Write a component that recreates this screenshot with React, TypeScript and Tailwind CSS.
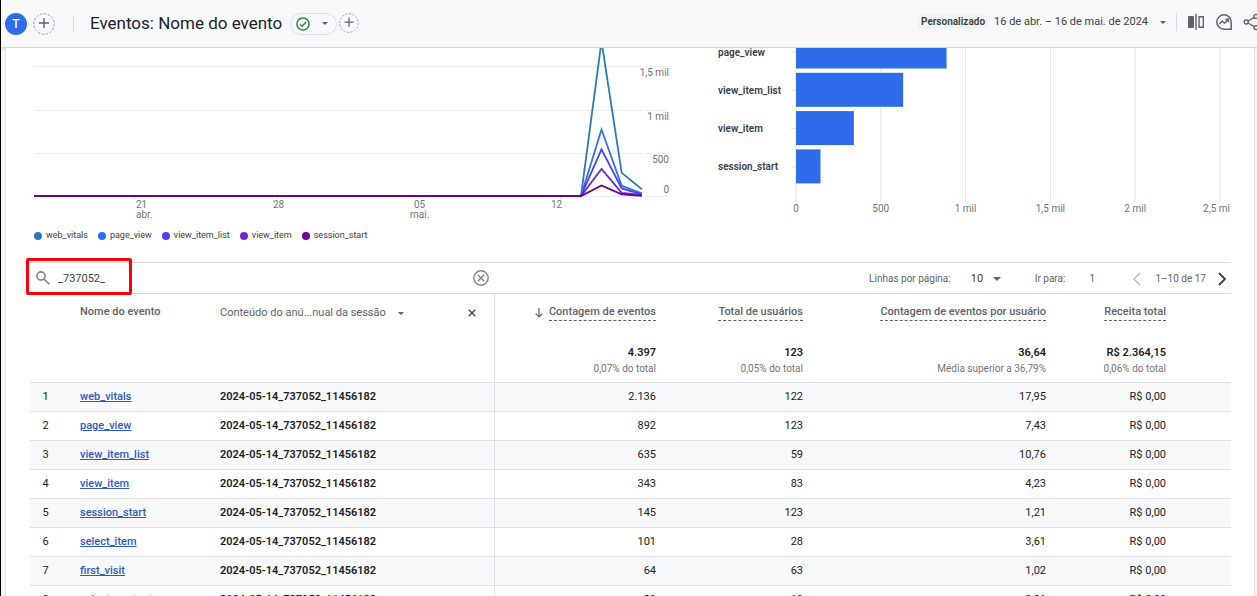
import { useState } from "react";
import type { ReactNode } from "react";

type Series = { name: string; color: string; points: number[] };

// Últimos dias do período; antes disso todas as séries ficam em zero.
const series: Series[] = [
  { name: "web_vitals", color: "#2a7ab5", points: [1790, 268, 78] },
  { name: "page_view", color: "#2f6fed", points: [770, 118, 30] },
  { name: "view_item_list", color: "#4f3ff0", points: [540, 88, 18] },
  { name: "view_item", color: "#7627d4", points: [312, 36, 12] },
  { name: "session_start", color: "#6a0392", points: [122, 20, 2] }
];

const bars = [
  { name: "page_view", value: 892 },
  { name: "view_item_list", value: 635 },
  { name: "view_item", value: 343 },
  { name: "session_start", value: 145 }
];

const metrics = [
  { label: "Contagem de eventos", total: "4.397", note: "0,07% do total", sorted: true },
  { label: "Total de usuários", total: "123", note: "0,05% do total" },
  { label: "Contagem de eventos por usuário", total: "36,64", note: "Média superior a 36,79%" },
  { label: "Receita total", total: "R$ 2.364,15", note: "0,06% do total" }
];

const content = "2024-05-14_737052_11456182";

const rows = [
  { name: "web_vitals", values: ["2.136", "122", "17,95", "R$ 0,00"] },
  { name: "page_view", values: ["892", "123", "7,43", "R$ 0,00"] },
  { name: "view_item_list", values: ["635", "59", "10,76", "R$ 0,00"] },
  { name: "view_item", values: ["343", "83", "4,23", "R$ 0,00"] },
  { name: "session_start", values: ["145", "123", "1,21", "R$ 0,00"] },
  { name: "select_item", values: ["101", "28", "3,61", "R$ 0,00"] },
  { name: "first_visit", values: ["64", "63", "1,02", "R$ 0,00"] },
  { name: "select_content", values: ["39", "13", "3,31", "R$ 0,00"] }
];

function Caret({ className = "h-[3px] w-1.5" }: { className?: string }) {
  return (
    <svg viewBox="0 0 8 4" className={`shrink-0 fill-[#5f6368] ${className}`} aria-hidden="true">
      <path d="M0 0h8L4 4z" />
    </svg>
  );
}

function AddButton({ label, className }: { label: string; className: string }) {
  return (
    <button type="button" aria-label={label} className={`shrink-0 ${className}`}>
      <svg viewBox="0 0 22 22" fill="none" stroke="#5f6368" className="h-full w-full">
        <circle cx="11" cy="11" r="10.3" stroke="#9aa0a6" strokeDasharray="2.5 1.5" />
        <path d="M11 5v10M6 10h10" strokeWidth="1.4" />
      </svg>
    </button>
  );
}

function IconButton({ label, children }: { label: string; children: ReactNode }) {
  return (
    <button type="button" aria-label={label} className="shrink-0 text-[#5f6368]">
      {children}
    </button>
  );
}

function Header() {
  return (
    <header className="flex h-12 shrink-0 items-center overflow-hidden border-b border-[#d5d7da] bg-[#f8f9fb] pl-1 whitespace-nowrap shadow-sm">
      <button
        type="button"
        className="flex size-[22px] shrink-0 items-center justify-center rounded-full bg-[#2f6ce9] text-xs font-medium text-white"
      >
        T
      </button>
      <AddButton label="Adicionar comparação" className="ml-1.5 size-[22px]" />
      <span className="ml-[18px] h-[18px] w-px bg-[#dadce0]" />
      <h1 className="ml-4 text-[17px] text-[#202124]">Eventos: Nome do evento</h1>
      <button
        type="button"
        aria-label="Status do relatório"
        className="ml-2 flex h-[22px] items-center gap-3 rounded-full border border-[#dfe1e5] pr-2 pl-[5px]"
      >
        <svg viewBox="0 0 14 14" fill="none" stroke="#35803f" className="size-3.5">
          <circle cx="7" cy="7" r="6.1" strokeWidth="1.5" />
          <path d="M4 7.2l2.1 2.1L10.2 5" strokeWidth="1.4" />
        </svg>
        <Caret />
      </button>
      <AddButton label="Adicionar filtro" className="mb-0.5 ml-0.5 size-5" />

      <div className="-mr-1 ml-auto flex items-center pb-[3px]">
        <span className="rounded-xs bg-[#f1f3f4] px-[3px] text-[10px] leading-[14px] font-semibold text-[#3c4043]">
          Personalizado
        </span>
        <button type="button" className="ml-1.5 flex items-center gap-3 text-[11px] text-[#3c4043]">
          16 de abr. – 16 de mai. de 2024
          <Caret />
        </button>
        <span className="mr-2.5 ml-2.5 h-[18px] w-px bg-[#dadce0]" />
        <IconButton label="Editar comparações">
          <svg viewBox="0 0 18 18" className="size-[18px]" fill="currentColor">
            <rect x="1" y="3" width="6" height="12" rx="1" />
            <rect x="8.3" y="1" width="1.4" height="16" />
            <path d="M11.4 3h5.6v12h-5.6zM12.8 4.4v9.2h2.8V4.4z" fillRule="evenodd" />
          </svg>
        </IconButton>
        <span className="w-2.5" />
        <IconButton label="Insights">
          <svg viewBox="0 0 18 18" className="size-[18px]" fill="none" stroke="currentColor" strokeWidth="1.5">
            <path d="M16.2 9A7.2 7.2 0 1 0 9 16.2h7.2z" />
            <path d="M4.3 11l3-3 2.2 2.2 3.8-3.8M10.4 6.2h3.1v3.1" />
          </svg>
        </IconButton>
        <span className="w-2.5" />
        <IconButton label="Compartilhar">
          <svg viewBox="0 0 18 18" className="size-[18px]" fill="none" stroke="currentColor" strokeWidth="1.4">
            <circle cx="3.2" cy="9" r="2" />
            <circle cx="13" cy="3.4" r="2" />
            <circle cx="13" cy="14.6" r="2" />
            <path d="M5 8l6.2-3.6M5 10l6.2 3.6" />
          </svg>
        </IconButton>
      </div>
    </header>
  );
}

function LineChart() {
  const base = 148;
  const y = (value: number) => base - (value / 500) * 43.2;
  return (
    <div>
      <svg viewBox="0 0 640 172" className="w-full text-[10px]" role="img" aria-label="Contagem de eventos por dia">
        {[18.5, 62.5, 105.5, 148.5].map((line) => (
          <path key={line} d={`M4 ${line}H612M615 ${line}H638`} stroke="#ececec" />
        ))}
        <path d="M105.5 148v4M247.5 148v4M389.5 148v4M530.5 148v4" stroke="#ececec" />
        {series.map((s) => (
          <polyline
            key={s.name}
            fill="none"
            stroke={s.color}
            strokeWidth="1.8"
            points={`4,${base} 551,${base} ${s.points.map((p, i) => `${571.5 + i * 20.2},${y(p)}`).join(" ")}`}
          />
        ))}
        <g fill="#757575" textAnchor="end">
          <text x="639" y="28">1,5 mil</text>
          <text x="639" y="72">1 mil</text>
          <text x="639" y="115">500</text>
          <text x="639" y="145">0</text>
        </g>
        <g fill="#757575">
          <text x="106" y="160">21</text>
          <text x="106" y="170">abr.</text>
          <text x="243" y="160">28</text>
          <text x="384" y="160">05</text>
          <text x="380" y="170">mai.</text>
          <text x="521" y="160">12</text>
        </g>
      </svg>
      <ul className="flex h-[30px] items-center gap-2.5 pt-0.5 pl-1 text-[9px] text-[#3c4043]">
        {series.map((s) => (
          <li key={s.name} className="flex items-center gap-1">
            <span className="size-2 rounded-full" style={{ backgroundColor: s.color }} />
            {s.name}
          </li>
        ))}
      </ul>
    </div>
  );
}

function BarChart() {
  const ticks = ["0", "500", "1 mil", "1,5 mil", "2 mil"];
  return (
    <svg viewBox="0 0 513 172" className="w-full text-[10px]" role="img" aria-label="Contagem de eventos por nome">
      {ticks.map((tick, i) => (
        <g key={tick}>
          <path d={`M${78 + i * 84.8} 0V154`} stroke="#e4e4e4" />
          <text x={78 + i * 84.8} y="164" textAnchor="middle" fill="#757575">
            {tick}
          </text>
        </g>
      ))}
      {/* o último rótulo encosta na borda do gráfico */}
      <path d="M502 0V154" stroke="#e4e4e4" />
      <text x="512" y="164" textAnchor="end" fill="#757575">
        2,5 mi
      </text>
      {bars.map((bar, i) => (
        <g key={bar.name}>
          <path d={`M73 ${4 + i * 38.3}h5`} stroke="#e4e4e4" />
          <rect x="78" y={-13.5 + i * 38.3} width={(bar.value / 500) * 84.4} height="34" fill="#2f6ce9" />
          <text x="0" y={7.5 + i * 38.3} fill="#3c4043" fontWeight="600">
            {bar.name}
          </text>
        </g>
      ))}
    </svg>
  );
}

function Toolbar() {
  const [query, setQuery] = useState("_737052_");
  return (
    <div className="relative flex h-8 items-center border-y border-[#dadce0] text-[10px] text-[#5f6368]">
      <div className="pointer-events-none absolute -top-[5px] -left-1 h-[37px] w-[106px] rounded-xs border-3 border-[#fb0007]" />
      <label className="flex items-center gap-2 pl-1.5">
        <svg viewBox="0 0 14 14" fill="none" stroke="#80868b" strokeWidth="1.6" className="size-3.5">
          <circle cx="5" cy="5" r="4.1" />
          <path d="M8 8l5.4 5.4" />
        </svg>
        <input
          aria-label="Pesquisar"
          value={query}
          onChange={(e) => setQuery(e.target.value)}
          className="w-[415px] pt-0.5 text-[11px] text-[#3c4043] outline-none"
        />
      </label>
      <button type="button" aria-label="Limpar pesquisa" onClick={() => setQuery("")}>
        <svg viewBox="0 0 16 16" fill="none" stroke="#80868b" strokeWidth="1.4" className="size-4">
          <circle cx="8" cy="8" r="7.2" />
          <path d="M4.8 4.8l6.4 6.4M11.2 4.8l-6.4 6.4" />
        </svg>
      </button>

      <div className="ml-auto flex items-center pt-px whitespace-nowrap">
        <label htmlFor="page-size">Linhas por página:</label>
        <span className="relative ml-5 flex items-center">
          <select id="page-size" defaultValue="10" className="w-[30px] appearance-none pt-0.5 text-[11px] text-[#3c4043]">
            <option>10</option>
            <option>25</option>
            <option>50</option>
          </select>
          <Caret className="pointer-events-none absolute right-0 h-1 w-2" />
        </span>
        <label htmlFor="page-number" className="ml-[34px]">
          Ir para:
        </label>
        <input id="page-number" defaultValue="1" className="ml-6 w-11 outline-none" />
        <button type="button" aria-label="Página anterior" disabled>
          <svg viewBox="0 0 8 14" fill="none" stroke="#b4b7ba" strokeWidth="1.4" className="h-3.5 w-2">
            <path d="M7 1L1 7l6 6" />
          </svg>
        </button>
        <span className="ml-3.5">1–10 de 17</span>
        <button type="button" aria-label="Próxima página" className="mr-[5px] ml-3">
          <svg viewBox="0 0 8 14" fill="none" stroke="#3c4043" strokeWidth="1.8" className="h-3.5 w-2">
            <path d="M1 1l6 6-6 6" />
          </svg>
        </button>
      </div>
    </div>
  );
}

function EventsTable() {
  return (
    <table className="w-full table-fixed border-separate border-spacing-0 text-[11px] leading-4 whitespace-nowrap text-[#202124]">
      <colgroup>
        <col className="w-[50px]" />
        <col className="w-[140px]" />
        <col />
        <col className="w-[173px]" />
        <col className="w-[147px]" />
        <col className="w-[243px]" />
        <col className="w-[173px]" />
      </colgroup>
      <thead className="text-[#5f6368]">
        <tr className="h-11 align-top">
          <th />
          <th className="pt-2.5 text-left font-medium">Nome do evento</th>
          <th className="border-r border-[#dadce0] pt-[11px] pr-[18px] font-normal">
            <div className="flex items-center">
              <button type="button" className="flex items-center gap-3">
                Conteúdo do anú...nual da sessão
                <Caret />
              </button>
              <button type="button" aria-label="Remover dimensão" className="ml-auto">
                <svg viewBox="0 0 8 8" fill="none" stroke="#3c4043" strokeWidth="1.3" className="size-2">
                  <path d="M.8.8l6.4 6.4M7.2.8L.8 7.2" />
                </svg>
              </button>
            </div>
          </th>
          {metrics.map((m) => (
            <th key={m.label} className="pt-2.5 pr-3 text-right font-medium last:pr-[65px]">
              <div className="flex items-center justify-end gap-1.5">
                {m.sorted && (
                  <svg viewBox="0 0 8 10" fill="none" stroke="#5f6368" strokeWidth="1.2" className="h-2.5 w-2">
                    <path d="M4 0v9M.6 5.6L4 9l3.4-3.4" />
                  </svg>
                )}
                <span className="border-b border-dashed border-[#5f6368]">{m.label}</span>
              </div>
            </th>
          ))}
        </tr>
        <tr className="h-[45px] align-top">
          <td colSpan={2} className="border-b border-[#dadce0]" />
          <td className="border-r border-b border-[#dadce0]" />
          {metrics.map((m) => (
            <td key={m.label} className="border-b border-[#dadce0] pt-[7px] pr-3 text-right last:pr-[65px]">
              <div className="font-semibold text-[#202124]">{m.total}</div>
              <div className="text-[10px] leading-4 text-[#757575]">{m.note}</div>
            </td>
          ))}
        </tr>
      </thead>
      <tbody>
        {rows.map((row, i) => (
          <tr key={row.name} className="h-[29px] odd:bg-[#f8f9fb]">
            <td className="border-b border-[#dfe1e5] pr-[19px] text-center">{i + 1}</td>
            <td className="border-b border-[#dfe1e5]">
              <a href="#" className="font-medium text-[#2f5bc4] underline">
                {row.name}
              </a>
            </td>
            <td className="border-r border-b border-[#dfe1e5] font-semibold">{content}</td>
            {row.values.map((value, j) => (
              <td key={j} className="border-b border-[#dfe1e5] pr-3 text-right last:pr-[65px]">
                {value}
              </td>
            ))}
          </tr>
        ))}
      </tbody>
    </table>
  );
}

export default function App() {
  return (
    <div className="flex h-screen flex-col overflow-hidden border-l border-black bg-[#f8f9fb] font-[Roboto,'Liberation_Sans',sans-serif]">
      <Header />
      <main className="mr-0.5 ml-1 min-h-0 flex-1 overflow-hidden border-x border-[#dfe1e5] bg-white pr-[23px] pl-6">
        <div className="mb-3 grid grid-cols-[640fr_513fr] gap-12">
          <LineChart />
          <BarChart />
        </div>
        <Toolbar />
        <EventsTable />
      </main>
    </div>
  );
}
